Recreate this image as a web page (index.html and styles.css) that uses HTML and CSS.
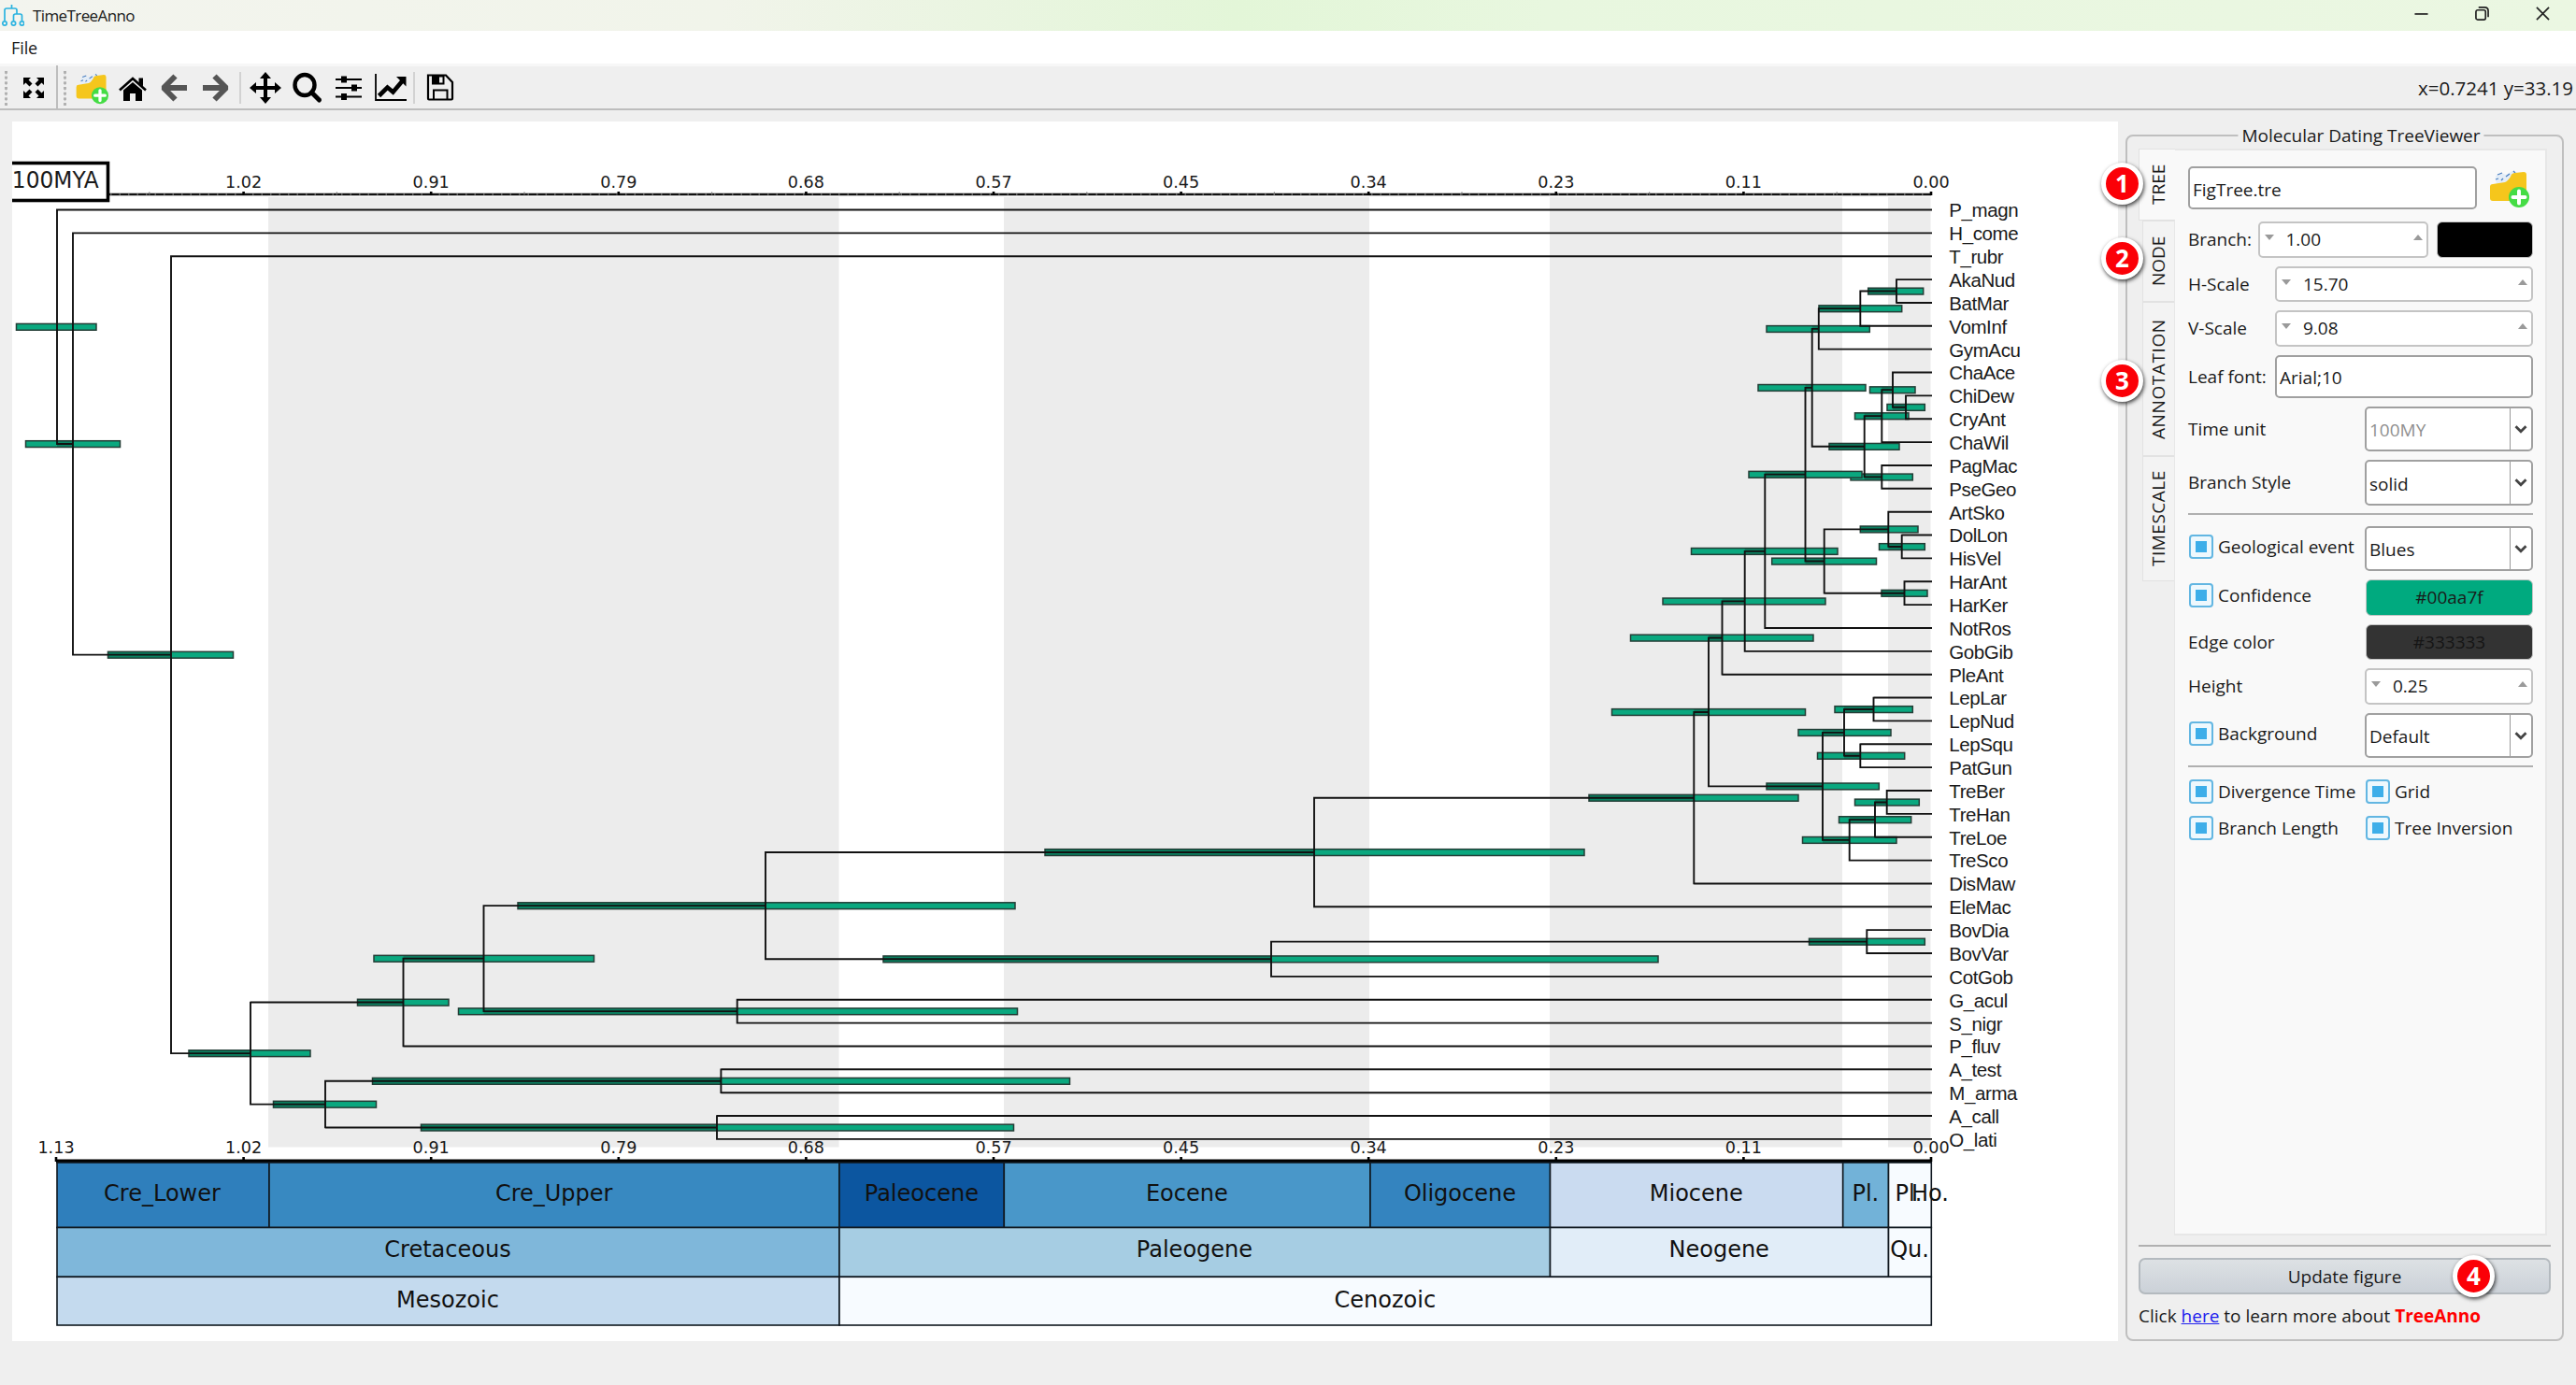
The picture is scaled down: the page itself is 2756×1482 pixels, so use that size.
FILE: index.html
```html
<!DOCTYPE html>
<html lang="en">
<head>
    <meta charset="UTF-8">
    <title>TimeTreeAnno</title>
    <link rel="stylesheet" href="styles.css">
</head>
<body>
    <!-- Shared icons -->
    <svg width="0" height="0" class="defs">
        <symbol id="folder-add" viewBox="0 0 44 44">
            <path d="M8 9l6-3 5 2 7-4 9 3-2 8-24 8z" fill="#e4edf7"/>
            <path d="M10 8l5-2M19 10l4-3M8 13l3-1M14 14l2-2M27 4l2 2" stroke="#4a7fc0" stroke-width="1.3"/>
            <path d="M2 21Q2 18 5 18L18 16Q21 15 24 10Q25 6 29 6L38 5Q41 5 41 8V36H5Q2 36 2 33Z" fill="#f5c61c"/>
            <circle cx="33" cy="32" r="11" fill="#45dc45"/>
            <path d="M33 25.5v13M26.500 32h13" stroke="#fff" stroke-width="4" stroke-linecap="round"/>
        </symbol>
    </svg>

    <!-- Title bar -->
    <div class="titlebar">
        <svg class="app-icon" viewBox="0 0 24 24" fill="none" stroke="#2bb3e0" stroke-width="1.7">
            <path d="M10.500 0v4M3 17V6q0-2 2-2h9q2 0 2 2v4M12.500 17v-5q0-2 2-2h5q2 0 2 2v5"/>
            <circle cx="3" cy="20" r="2.200"/><circle cx="12.500" cy="20" r="2.200"/><circle cx="21.500" cy="20" r="2.200"/>
        </svg>
        <span class="title">TimeTreeAnno</span>
        <div class="window-buttons">
            <svg viewBox="0 0 16 16"><path d="M0.500 8.500h15"/></svg>
            <svg viewBox="0 0 16 16"><rect x="1" y="4" width="11" height="11" rx="2"/><path d="M4 1h7q4 0 4 4v7"/></svg>
            <svg viewBox="0 0 16 16"><path d="M1 1l14 14M15 1l-14 14"/></svg>
        </div>
    </div>
    <div class="menubar"><span>File</span></div>

    <!-- Toolbar -->
    <div class="toolbar">
        <div class="grip"></div>
        <svg class="tool tool-expand" viewBox="0 0 36 36">
            <path d="M7 7h8l-2.500 2.500 4 4-3 3-4-4L7 15zM29 7v8l-2.500-2.500-4 4-3-3 4-4L21 7zM7 29v-8l2.500 2.500 4-4 3 3-4 4L15 29zM29 29h-8l2.500-2.500-4-4 3-3 4 4L29 21z"/>
        </svg>
        <div class="bar-sep tall"></div>
        <div class="grip second"></div>
        <svg class="tool"><use href="#folder-add"/></svg>
        <svg class="tool" viewBox="0 0 36 36">
            <path d="M4 20.500L18 8l14 12.500" fill="none" stroke="#000" stroke-width="2.600"/>
            <path d="M24.500 7.500h4.500v9l-4.500-4zM8 20.500L18 12l10 8.500V32h-7v-8h-6v8H8z"/>
        </svg>
        <svg class="tool" viewBox="0 0 36 36"><path d="M19.500 5.500L7 18l12.500 12.500M8 18h24" fill="none" stroke="#555" stroke-width="6" stroke-linejoin="bevel"/></svg>
        <svg class="tool" viewBox="0 0 36 36"><path d="M17.500 5.500L30 18 17.500 30.500M29 18H5" fill="none" stroke="#555" stroke-width="6" stroke-linejoin="bevel"/></svg>
        <div class="bar-sep"></div>
        <svg class="tool" viewBox="0 0 36 36"><path d="M18 1l6 7h-4v8h8v-4l7 6-7 6v-4h-8v8h4l-6 7-6-7h4v-8H8v4l-7-6 7-6v4h8V8h-4z"/></svg>
        <svg class="tool" viewBox="0 0 36 36"><ellipse cx="16" cy="15" rx="10.500" ry="11" fill="none" stroke="#000" stroke-width="4.400"/><path d="M23.500 23l8 8" stroke="#000" stroke-width="5" stroke-linecap="round"/></svg>
        <svg class="tool" viewBox="0 0 36 36"><path d="M5 9h28M5 18h28M5 27.500h28" stroke="#000" stroke-width="2.200"/><path d="M11 5.500h6v7h-6zM22 14.500h6v7h-6zM11 24h6v7h-6z"/></svg>
        <svg class="tool" viewBox="0 0 36 36">
            <path d="M4 3v28h33" fill="none" stroke="#000" stroke-width="1.800"/>
            <path d="M7.500 26.500l9-9 6 5L33 10" fill="none" stroke="#000" stroke-width="4.600"/><path d="M26 6h10.500v10.500z"/>
        </svg>
        <div class="bar-sep"></div>
        <svg class="tool" viewBox="0 0 36 36">
            <path d="M6 4.500h19l7 7.500v17.500q0 1-1 1H7q-1 0-1-1z" fill="none" stroke="#000" stroke-width="2.200"/>
            <path d="M10 5h13.500v9.500H10zM11 19.500h16.500V30h-16.500z"/><path d="M18 6.500h3.500v6H18zM13 21.500h12.500v8H13z" fill="#efefef"/>
        </svg>
        <span class="coords">x=0.7241 y=33.19</span>
    </div>

    <div class="workspace">
        <!-- Figure canvas: the svg keeps window coordinates -->
        <svg id="figure" class="figure" viewBox="13 130 2253 1305"></svg>

        <!-- Settings -->
        <div class="group">
            <span class="group-title">Molecular Dating TreeViewer</span>
            <div class="tabs">
                <div class="tab-bar">
                    <div class="tab tab-tree active">TREE</div>
                    <div class="tab tab-node">NODE</div>
                    <div class="tab tab-annotation">ANNOTATION</div>
                    <div class="tab tab-timescale">TIMESCALE</div>
                </div>
                <div class="pane">
                    <div class="row row-file">
                        <div class="input file">FigTree.tre</div>
                        <svg class="folder"><use href="#folder-add"/></svg>
                    </div>
                    <div class="row">
                        <label>Branch:</label>
                        <div class="spin branch"><i class="down"></i><span>1.00</span><i class="up"></i></div>
                        <div class="swatch black"></div>
                    </div>
                    <div class="row">
                        <label>H-Scale</label>
                        <div class="spin wide"><i class="down"></i><span>15.70</span><i class="up"></i></div>
                    </div>
                    <div class="row">
                        <label>V-Scale</label>
                        <div class="spin wide"><i class="down"></i><span>9.08</span><i class="up"></i></div>
                    </div>
                    <div class="row">
                        <label>Leaf font:</label>
                        <div class="input wide">Arial;10</div>
                    </div>
                    <div class="row">
                        <label>Time unit</label>
                        <div class="combo disabled"><span>100MY</span><svg viewBox="0 0 14 10"><path d="M1.500 2l5.500 5.500L12.500 2"/></svg></div>
                    </div>
                    <div class="row">
                        <label>Branch Style</label>
                        <div class="combo"><span>solid</span><svg viewBox="0 0 14 10"><path d="M1.500 2l5.500 5.500L12.500 2"/></svg></div>
                    </div>
                    <hr>
                    <div class="row">
                        <label class="check">Geological event</label>
                        <div class="combo"><span>Blues</span><svg viewBox="0 0 14 10"><path d="M1.500 2l5.500 5.500L12.500 2"/></svg></div>
                    </div>
                    <div class="row">
                        <label class="check">Confidence</label>
                        <div class="swatch green">#00aa7f</div>
                    </div>
                    <div class="row">
                        <label>Edge color</label>
                        <div class="swatch dark">#333333</div>
                    </div>
                    <div class="row">
                        <label>Height</label>
                        <div class="spin"><i class="down"></i><span>0.25</span><i class="up"></i></div>
                    </div>
                    <div class="row">
                        <label class="check">Background</label>
                        <div class="combo"><span>Default</span><svg viewBox="0 0 14 10"><path d="M1.500 2l5.500 5.500L12.500 2"/></svg></div>
                    </div>
                    <hr>
                    <div class="check-grid">
                        <label class="check">Divergence Time</label>
                        <label class="check">Grid</label>
                        <label class="check">Branch Length</label>
                        <label class="check">Tree Inversion</label>
                    </div>
                </div>
            </div>
            <hr class="footer-line">
            <div class="update-btn">Update figure<span class="badge badge-4">4</span></div>
            <div class="more">Click <a href="#">here</a> to learn more about <b>TreeAnno</b></div>
            <span class="badge badge-1">1</span>
            <span class="badge badge-2">2</span>
            <span class="badge badge-3">3</span>
        </div>
    </div>

    <script src="tree.js"></script>
</body>
</html>
```
FILE: styles.css
```css
* {
    box-sizing: border-box;
}
body {
    margin: 0;
    width: 2756px;
    height: 1482px;
    overflow: hidden;
    background: #efefef;
    color: #1a1a1a;
    font-family: 'Open Sans', 'Noto Sans', sans-serif;
    font-size: 19px;
    display: flex;
    flex-direction: column;
}
.defs {
    position: absolute;
}

/* window chrome */
.titlebar {
    height: 33px;
    display: flex;
    align-items: center;
    padding-left: 2px;
    background: linear-gradient(90deg, #f3f4ee 0%, #f1f4ea 28%, #e3f6d8 48%, #e8f7df 60%, #ebf7e2 100%);
}
.app-icon {
    width: 24px;
    height: 24px;
}
.title {
    margin-left: 9px;
    font-size: 17px;
    letter-spacing: -0.6px;
    padding-bottom: 1px;
}
.window-buttons {
    margin-left: auto;
    margin-right: 28px;
    display: flex;
    gap: 50px;
    padding-bottom: 4px;
}
.window-buttons svg {
    width: 15px;
    height: 15px;
    fill: none;
    stroke: #222;
    stroke-width: 1.8;
}
.menubar {
    height: 38px;
    padding: 6px 12px;
    background: #fff;
    border-bottom: 3px solid #f7f7f7;
    font-size: 18px;
    line-height: 25px;
}
.menubar span {
    letter-spacing: -0.1px;
}
.toolbar {
    height: 47px;
    display: flex;
    align-items: center;
    gap: 8px;
    padding: 0 3px 0 4px;
    border-bottom: 2px solid #bdbdbd;
}
.tool {
    width: 36px;
    height: 36px;
    flex: none;
    overflow: visible;
}
.tool-expand {
    margin: 0 -2px 0 1px;
}
.grip {
    width: 5px;
    height: 38px;
    background: radial-gradient(circle at 2.500px 2.500px, #b0b0b0 1.600px, transparent 2px) 0 0 / 5px 5.700px;
}
.grip.second {
    margin-left: -3px;
}
.bar-sep {
    width: 2px;
    height: 34px;
    background: #d2d2d2;
}
.bar-sep.tall {
    height: 48px;
    background: #bdbdbd;
}
.coords {
    margin-left: auto;
    font-size: 20.5px;
}

/* main area */
.workspace {
    display: flex;
    align-items: flex-start;
    padding: 12px 13px 0;
}
.figure {
    width: 2253px;
    height: 1305px;
    background: #fff;
    flex: none;
}
.figure text {
    font-family: 'DejaVu Sans', sans-serif;
    fill: #1a1a1a;
}
.figure .tick-label {
    font-size: 17.6px;
    text-anchor: middle;
}
.figure .period {
    font-size: 24px;
    text-anchor: middle;
    fill: #111;
}
.figure .leaf {
    font-family: 'Liberation Sans', Arial, sans-serif;
    font-size: 20.5px;
    letter-spacing: -0.4px;
}
.branch-line {
    fill: none;
    stroke: #111;
    stroke-width: 1.9;
}
.ci {
    fill: #0aa87f;
    stroke: #243d36;
    stroke-width: 1.5;
}
.ci-shade {
    fill: #0b3a2b;
    opacity: 0.35;
}
.band {
    fill: #ececec;
}
.cell {
    stroke: #101820;
    stroke-width: 1.6;
}

/* settings panel */
.group {
    position: relative;
    width: 469px;
    height: 1291px;
    margin: 14px 0 0 8px;
    border: 2px solid #bfbfbf;
    border-radius: 8px;
    padding: 13px 12px 0;
}
.group-title {
    position: absolute;
    top: -14px;
    left: 250px;
    transform: translateX(-50%);
    padding: 0 4px;
    background: #efefef;
    line-height: 26px;
    white-space: nowrap;
}
.tabs {
    display: flex;
    height: 1163px;
    margin-right: 4px;
}
.tab-bar {
    width: 38px;
    flex: none;
    display: flex;
    flex-direction: column;
    align-items: flex-end;
}
.tab {
    width: 34px;
    writing-mode: vertical-rl;
    transform: rotate(180deg);
    text-align: center;
    line-height: 32px;
    background: #f3f3f3;
    border: 1px solid #e2e2e2;
    border-left: none;
}
.tab.active {
    width: 39px;
    background: #f9f9f9;
    line-height: 41px;
    border-left: none;
    margin-right: -1px;
    z-index: 1;
}
.tab-tree { height: 77px; }
.tab-node { height: 87px; }
.tab-annotation {
    height: 165px;
    letter-spacing: 0.6px;
}
.tab-timescale {
    height: 134px;
    letter-spacing: 0.5px;
}
.pane {
    flex: 1;
    background: #f9f9f9;
    border: 2px solid #e7e7e7;
    border-left-width: 1px;
    padding: 17px 13px 0 14px;
    display: flex;
    flex-direction: column;
    gap: 9px;
}
.row {
    display: flex;
    align-items: center;
    justify-content: space-between;
}
.row-file {
    margin-bottom: 4px;
}
.row label {
    white-space: nowrap;
}
.input, .combo {
    background: #fff;
    border: 2px solid #a0a0a0;
    border-radius: 5px;
}
.input {
    height: 46px;
    padding: 3px 0 0 3px;
    line-height: 39px;
}
.input.file {
    width: 309px;
    line-height: 40px;
}
.folder {
    width: 44px;
    height: 44px;
    margin-right: 4px;
}
.wide.input, .wide.spin {
    width: 276px;
}
.spin {
    width: 180px;
    height: 38.5px;
    background: #fff;
    border: 2px solid #c4c4c4;
    border-radius: 5px;
    display: flex;
    align-items: center;
    padding: 0 4px 0 5px;
}
.spin.branch {
    width: 182px;
    margin-left: -3px;
}
.spin span {
    margin-left: 13px;
}
.spin i {
    width: 0;
    height: 0;
    margin-top: -4px;
    border: 5px solid transparent;
}
.spin .down {
    border-top: 6px solid #9a9a9a;
    border-bottom: none;
}
.spin .up {
    margin-left: auto;
    border-bottom: 6px solid #9a9a9a;
    border-top: none;
}
.swatch {
    width: 179px;
    height: 38.5px;
    border: 1px solid #c4c4c4;
    border-radius: 6px;
    text-align: center;
    line-height: 37px;
}
.swatch.black {
    width: 103px;
    background: #000;
}
.swatch.green {
    background: #00aa7f;
}
.swatch.dark {
    background: #333;
    color: #151515;
}
.combo {
    width: 180px;
    height: 48.5px;
    display: flex;
    align-items: center;
    padding-left: 3px;
}
.combo span {
    flex: 1;
    padding-top: 3px;
}
.combo svg {
    width: 23px;
    height: 100%;
    padding: 0 4px;
    border-left: 1px solid #999;
    fill: none;
    stroke: #444;
    stroke-width: 2.8;
}
.combo.disabled {
    color: #909090;
}
hr {
    width: 100%;
    margin: 0;
    border: none;
    border-top: 2px solid #b0b0b0;
}
.pane hr {
    flex: none;
    margin-top: -1px;
}
.pane hr + .row {
    margin-top: 3px;
}
.check {
    display: flex;
    align-items: center;
    white-space: nowrap;
}
.row .check {
    padding-bottom: 4px;
}
.check::before {
    content: '';
    width: 22px;
    height: 22px;
    margin: 0 5px 0 1px;
    border: 2px solid #62b6e2;
    border-radius: 4px;
    background: linear-gradient(#3daee9, #3daee9) center / 12px 12px no-repeat, #eef8fd;
}
.check-grid {
    display: grid;
    grid-template-columns: 189px 1fr;
    row-gap: 12.5px;
    padding-top: 4px;
}
.footer-line {
    margin-top: 10px;
}
.update-btn {
    position: relative;
    height: 39px;
    margin-top: 12px;
    border: 2px solid #b4babf;
    border-radius: 7px;
    background: linear-gradient(#dde1e4, #cbd1d8);
    text-align: center;
    line-height: 36px;
}
.more {
    margin-top: 10px;
    line-height: 26px;
    white-space: nowrap;
}
.more a {
    color: #2020ee;
}
.more b {
    color: #ff0000;
}

/* numbered callouts lie over the window */
.badge {
    position: absolute;
    width: 45px;
    height: 45px;
    border: 5px solid #fff;
    border-radius: 50%;
    background: #fb0007;
    color: #fff;
    font-weight: bold;
    font-size: 26px;
    line-height: 34px;
    text-align: center;
    box-shadow: 1px 2px 4px rgba(0, 0, 0, 0.75);
    z-index: 2;
}
.badge-1 { left: -28px; top: 28px; }
.badge-2 { left: -28px; top: 108px; }
.badge-3 { left: -28px; top: 239px; }
.badge-4 { left: 334px; top: -5px; }
```
FILE: tree.js
```js
const NS = 'http://www.w3.org/2000/svg';
const svg = document.getElementById('figure');

function add(name, attrs, text) {
    const el = document.createElementNS(NS, name);
    for (const key in attrs) el.setAttribute(key, attrs[key]);
    if (text) el.textContent = text;
    svg.appendChild(el);
}

// node: [x, ciStart, ciEnd, child, child], leaf: name
const tree =
[61, 17.5, 103, 'P_magn',
 [78, 27.5, 128.5, 'H_come',
  [183, 115.5, 249.5, 'T_rubr',
   [268, 202, 332, 
    [431.5, 382.5, 480,
     [517.5, 400, 635.5,
      [819, 554, 1086,
       [1406, 1118, 1695,
        [1812.3, 1700, 1924,
         [1828, 1724.5, 1931.5,
          [1842.5, 1744.5, 1940,
           [1866.7, 1779, 1953,
            [1888.3, 1809.5, 1966,
             [1931.5, 1871, 1992,
              [1938.7, 1881, 1996,
               [1945.8, 1890, 2000.3,
                [1990.3, 1946, 2034.7,
                 [2029, 1998.7, 2057.7, 'AkaNud', 'BatMar'], 'VomInf'], 'GymAcu'],
               [1994.7, 1957, 2032,
                [2013.3, 1984.5, 2042,
                 [2025, 2000.5, 2049, 'ChaAce',
                  [2039, 2019, 2059.3, 'ChiDew', 'CryAnt']], 'ChaWil'],
                [2013.3, 1980, 2046.3, 'PagMac', 'PseGeo']]],
              [1951.7, 1895.7, 2007.5,
               [2020.3, 1990.3, 2052, 'ArtSko',
                [2034.7, 2010.5, 2059.3, 'DolLon', 'HisVel']],
               [2037.5, 2013, 2062, 'HarAnt', 'HarKer']]], 'NotRos'], 'GobGib'], 'PleAnt'],
          [1950, 1890, 2010.3,
           [1973, 1924, 2023,
            [2004.5, 1963, 2046.3, 'LepLar', 'LepNud'],
            [1990.3, 1944.5, 2037.7, 'LepSqu', 'PatGun']],
           [1978.7, 1928.5, 2029,
            [2006, 1967.5, 2044.7,
             [2018.7, 1984.5, 2053.3, 'TreBer', 'TreHan'], 'TreLoe'], 'TreSco']]], 'DisMaw'], 'EleMac'],
       [1360, 945, 1774,
        [1997.3, 1935.5, 2059.3, 'BovDia', 'BovVar'], 'CotGob']],
      [788.7, 490.5, 1088.5, 'G_acul', 'S_nigr']], 'P_fluv'],
    [348, 292.5, 402.5,
     [771.4, 398.5, 1144.5, 'A_test', 'M_arma'],
     [767, 450.5, 1084.5, 'A_call', 'O_lati']]]]]];

const TIP_X = 2067;
const FIRST_Y = 224.5;
const STEP = 24.86;

// Shaded background bands
[[287, 897.5], [1074, 1465], [1658, 1971], [2020, 2065.5]].forEach(([a, b]) =>
    add('rect', { class: 'band', x: a, y: 211, width: b - a, height: 1016.500 }));

// Tree
const bars = [], shades = [], lines = [], leaves = [];
let row = 0;
function place(node, parentX) {
    if (typeof node === 'string') {
        const y = FIRST_Y + STEP * row++;
        lines.push(`M${parentX} ${y}H${TIP_X}`);
        leaves.push([node, y]);
        return y;
    }
    const [x, from, to, a, b] = node;
    const y1 = place(a, x);
    const y2 = place(b, x);
    const y = (y1 + y2) / 2;
    lines.push(`M${x} ${y1 - 0.9}V${y2 + 0.9}M${parentX} ${y}H${x}`);
    bars.push([from, to, y]);
    const start = Math.max(parentX, from);
    if (start < x) shades.push([start, x, y]);
    return y;
}
place(tree, 61);
bars.forEach(([a, b, y]) => add('rect', { class: 'ci', x: a, y: y - 3.3, width: b - a, height: 6.8 }));
shades.forEach(([a, b, y]) => add('rect', { class: 'ci-shade', x: a, y: y - 3, width: b - a, height: 6 }));
add('path', { class: 'branch-line', d: lines.join('') });
leaves.forEach(([name, y]) => add('text', { class: 'leaf', x: 2085.3, y: y + 7.9 }, name));

// Top and bottom axes
add('path', { d: 'M61 208H2066', stroke: '#111', 'stroke-width': 2.4 });
add('path', { d: 'M61 208H2066', stroke: '#777', 'stroke-width': 1.4, 'stroke-dasharray': '1.5 8' });
add('path', { d: 'M60 1242.500H2067', stroke: '#000', 'stroke-width': 4 });
['1.13', '1.02', '0.91', '0.79', '0.68', '0.57', '0.45', '0.34', '0.23', '0.11', '0.00'].forEach((t, i) => {
    const x = 59.5 + i * 200.6;
    add('path', { d: `M${x + 0.5} 205v4M${x + 0.5} 1238v5`, stroke: '#000', 'stroke-width': 2.6 });
    if (i < 10) add('path', { d: `M${x + 100.3} 205.500v3`, stroke: '#777', 'stroke-width': 1.2 });
    if (i) add('text', { class: 'tick-label', x: x + 0.5, y: 201 }, t);
    add('text', { class: 'tick-label', x: x + 0.5, y: 1233.7 }, t);
});

// Unit box, cut off by the canvas edge
add('rect', { x: 0, y: 174.5, width: 115.5, height: 40, fill: '#fff', stroke: '#000', 'stroke-width': 3.600 });
add('text', { x: 12.8, y: 201.3, 'font-size': 24, textLength: 93, lengthAdjust: 'spacingAndGlyphs' }, '100MYA');

// Geological time scale: [x1, x2, colour, label, label centre]
const scale = [
    { top: 1244, bottom: 1313.5, base: 1285.3, cells: [
        [61, 288, '#2f7fbc', 'Cre_Lower', 173.5], [288, 898, '#3889c1', 'Cre_Upper'],
        [898, 1074.3, '#0c56a0', 'Paleocene'], [1074.3, 1466, '#4997c9', 'Eocene'],
        [1466, 1658.5, '#3484bf', 'Oligocene'], [1658.5, 1971.7, '#cadbf0', 'Miocene'],
        [1971.7, 2020.5, '#72b2d8', 'Pl.'], [2020.5, 2066.300, '#f7fbff', 'Pl.', 2042]] },
    { top: 1313.5, bottom: 1366.3, base: 1345.3, cells: [
        [61, 898, '#7fb7da', 'Cretaceous', 479], [898, 1658.5, '#a6cde3', 'Paleogene'],
        [1658.5, 2020.5, '#e1edf8', 'Neogene'], [2020.5, 2066.300, '#f7fbff', 'Qu.']] },
    { top: 1366.3, bottom: 1418, base: 1398.5, cells: [
        [61, 898, '#c4daee', 'Mesozoic', 479], [898, 2066.300, '#f7fbff', 'Cenozoic']] }
];
scale.forEach(r => r.cells.forEach(([a, b, fill]) =>
    add('rect', { class: 'cell', x: a, y: r.top, width: b - a, height: r.bottom - r.top, fill })));
scale.forEach(r => r.cells.forEach(([a, b, fill, label, cx]) =>
    add('text', { class: 'period', x: cx || (a + b) / 2 - 0.3, y: r.base }, label)));
// Holocene is too narrow to get a cell of its own
add('text', { class: 'period', x: 2065, y: 1285.3 }, 'Ho.');
```
